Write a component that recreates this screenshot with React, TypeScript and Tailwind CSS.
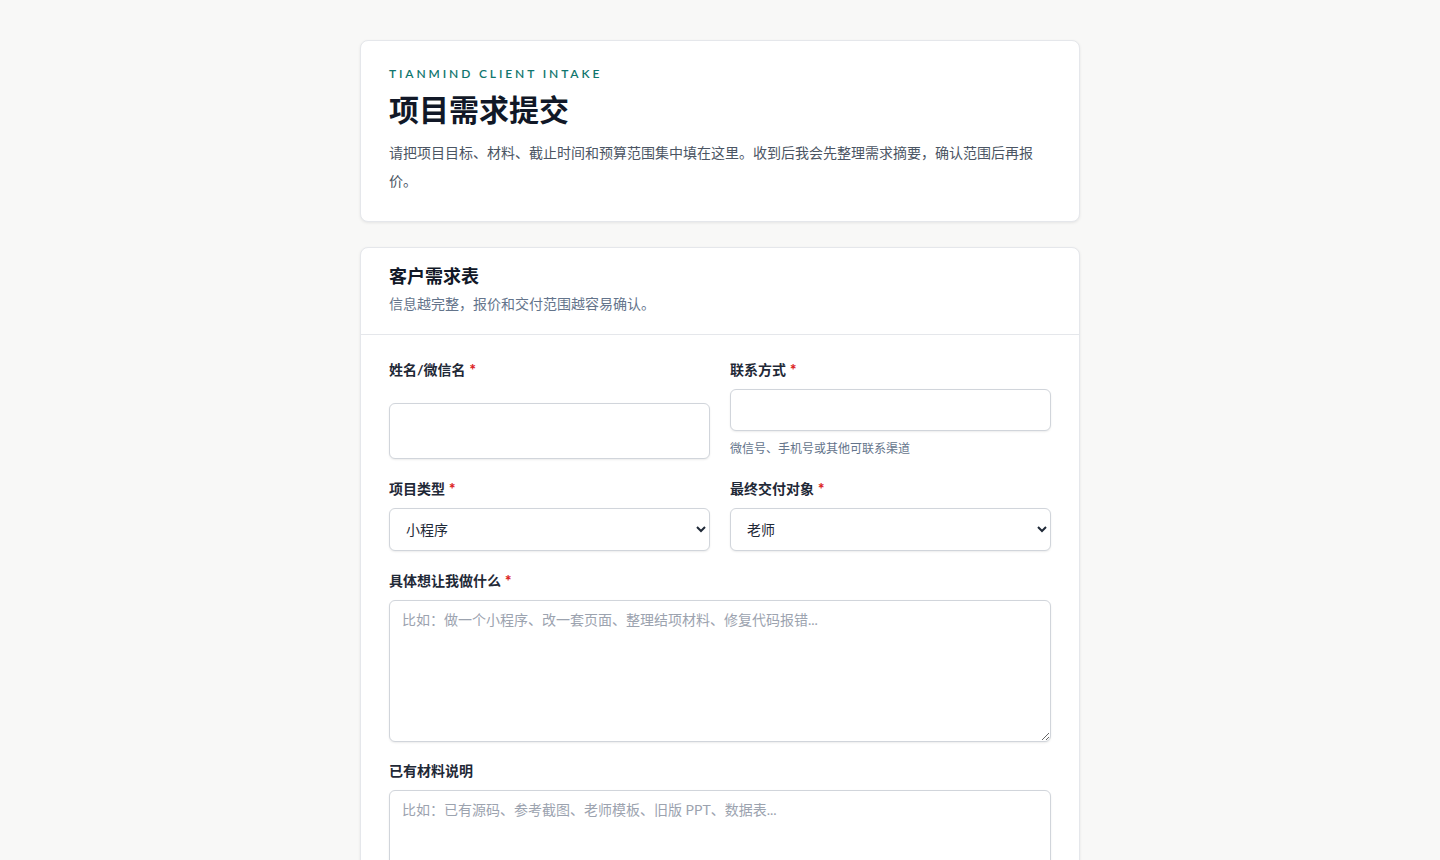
const font = { fontFamily: "Lato, 'Noto Sans CJK SC', sans-serif" };

const Label = ({ text, required }: { text: string; required?: boolean }) => (
  <div className="text-[14px] font-bold text-[#1f2937] leading-[18px]">
    {text}
    {required && <span className="ml-1 text-[15px] font-extrabold text-[#dc2626]">*</span>}
  </div>
);

const baseCls =
  "w-full rounded-md border border-[#d1d5db] bg-white text-[14px] text-[#1f2937] shadow-[0_1px_2px_rgba(0,0,0,0.08)] outline-none";

export default function App() {
  return (
    <div className="min-h-[860px] bg-[#f8f8f7] pt-10" style={font}>
      <div className="mx-auto flex w-[720px] flex-col gap-[25px]">
        <div className="rounded-lg border border-[#e5e7eb] bg-white px-7 pt-[25px] pb-[26px] shadow-[0_1px_3px_rgba(0,0,0,0.08)]">
          <div className="text-[12px] font-semibold tracking-[0.24em] text-[#0f766e] leading-4">
            TIANMIND CLIENT INTAKE
          </div>
          <h1 className="mt-[7px] text-[30px] font-bold leading-[40px] text-[#111827]">项目需求提交</h1>
          <p className="mt-[10px] text-[14px] leading-[28px] text-[#4b5563]">
            请把项目目标、材料、截止时间和预算范围集中填在这里。收到后我会先整理需求摘要，确认范围后再报价。
          </p>
        </div>

        <div className="rounded-t-lg border border-[#e5e7eb] bg-white shadow-[0_1px_3px_rgba(0,0,0,0.08)]">
          <div className="border-b border-[#e5e7eb] px-7 pt-[16px] pb-[20px]">
            <div className="text-[18px] font-bold leading-6 text-[#111827]">客户需求表</div>
            <div className="mt-[6px] text-[14px] leading-5 text-[#64748b]">信息越完整，报价和交付范围越容易确认。</div>
          </div>
          <div className="px-7 pt-[25px] pb-10">
            <div className="grid grid-cols-2 gap-x-5">
              <div>
                <Label text="姓名/微信名" required />
                <input className={`${baseCls} mt-6 h-[56px] px-4`} />
              </div>
              <div>
                <Label text="联系方式" required />
                <input className={`${baseCls} mt-[10px] h-[42px] px-4`} />
                <div className="mt-[10px] text-[12px] leading-4 text-[#64748b]">微信号、手机号或其他可联系渠道</div>
              </div>
            </div>
            <div className="mt-[20px] grid grid-cols-2 gap-x-5">
              <div>
                <Label text="项目类型" required />
                <select className={`${baseCls} mt-[10px] h-[43px] px-3`} defaultValue="小程序">
                  <option>小程序</option>
                </select>
              </div>
              <div>
                <Label text="最终交付对象" required />
                <select className={`${baseCls} mt-[10px] h-[43px] px-3`} defaultValue="老师">
                  <option>老师</option>
                </select>
              </div>
            </div>
            <div className="mt-[20px]">
              <Label text="具体想让我做什么" required />
              <textarea
                className={`${baseCls} mt-[10px] h-[142px] px-3 py-2 leading-[22px] placeholder:text-[#9ca3af]`}
                placeholder="比如：做一个小程序、改一套页面、整理结项材料、修复代码报错..."
              />
            </div>
            <div className="mt-[14px]">
              <Label text="已有材料说明" />
              <textarea
                className={`${baseCls} mt-[10px] h-[120px] px-3 py-2 leading-[22px] placeholder:text-[#9ca3af]`}
                placeholder="比如：已有源码、参考截图、老师模板、旧版 PPT、数据表..."
              />
            </div>
          </div>
        </div>
      </div>
    </div>
  );
}
